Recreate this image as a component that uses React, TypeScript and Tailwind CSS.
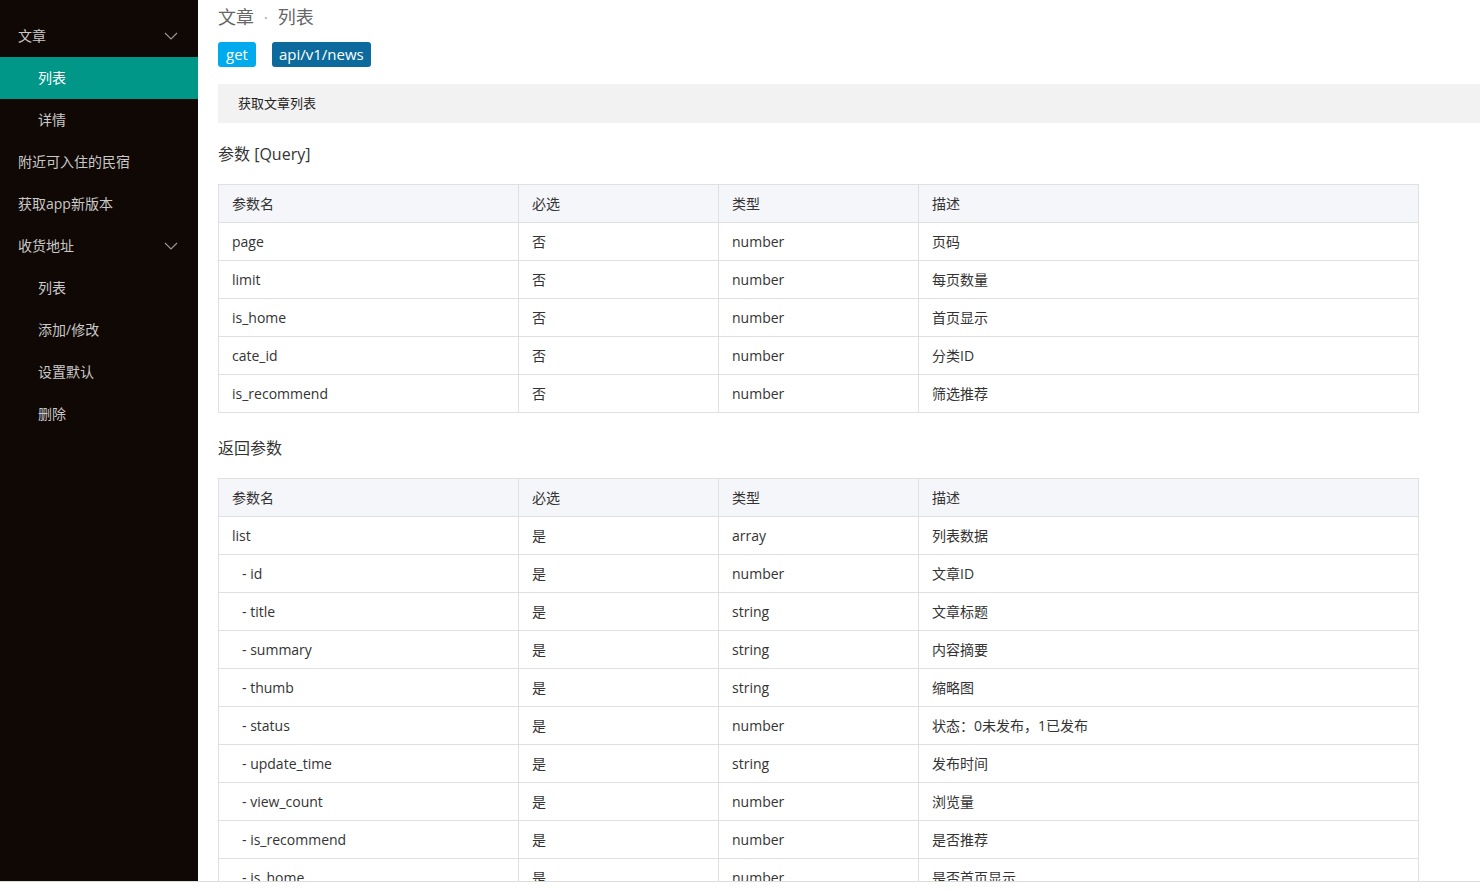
import React from 'react';

type Row = { name: string; req: string; type: string; desc: string; child?: boolean };

const queryRows: Row[] = [
  { name: 'page', req: '否', type: 'number', desc: '页码' },
  { name: 'limit', req: '否', type: 'number', desc: '每页数量' },
  { name: 'is_home', req: '否', type: 'number', desc: '首页显示' },
  { name: 'cate_id', req: '否', type: 'number', desc: '分类ID' },
  { name: 'is_recommend', req: '否', type: 'number', desc: '筛选推荐' },
];

const returnRows: Row[] = [
  { name: 'list', req: '是', type: 'array', desc: '列表数据' },
  { name: 'id', req: '是', type: 'number', desc: '文章ID', child: true },
  { name: 'title', req: '是', type: 'string', desc: '文章标题', child: true },
  { name: 'summary', req: '是', type: 'string', desc: '内容摘要', child: true },
  { name: 'thumb', req: '是', type: 'string', desc: '缩略图', child: true },
  { name: 'status', req: '是', type: 'number', desc: '状态：0未发布，1已发布', child: true },
  { name: 'update_time', req: '是', type: 'string', desc: '发布时间', child: true },
  { name: 'view_count', req: '是', type: 'number', desc: '浏览量', child: true },
  { name: 'is_recommend', req: '是', type: 'number', desc: '是否推荐', child: true },
  { name: 'is_home', req: '是', type: 'number', desc: '是否首页显示', child: true },
  { name: 'create_time', req: '是', type: 'string', desc: '创建时间', child: true },
  { name: 'total', req: '是', type: 'number', desc: '总数' },
];

const Chevron = () => (
  <svg width="14" height="8" viewBox="0 0 14 8" fill="none" className="text-[#9a9a9a]">
    <path d="M1 1l6 6 6-6" stroke="currentColor" strokeWidth="1.1" />
  </svg>
);

const NavItem: React.FC<{ label: string; sub?: boolean; active?: boolean; open?: boolean }> = ({ label, sub, active, open }) => (
  <div
    className={`h-[42px] flex items-center justify-between pr-[20px] text-[14px] ${sub ? 'pl-[38px]' : 'pl-[18px]'} ${
      active ? 'bg-[#009688] text-white' : 'text-[#c9c9c9]'
    }`}
  >
    <span className="-mt-[2px]">{label}</span>
    {open && <Chevron />}
  </div>
);

const ParamTable: React.FC<{ rows: Row[] }> = ({ rows }) => (
  <table className="w-[1200px] border-collapse table-fixed text-[14px] text-[#333]">
    <colgroup>
      <col className="w-[300px]" />
      <col className="w-[200px]" />
      <col className="w-[200px]" />
      <col className="w-[500px]" />
    </colgroup>
    <thead>
      <tr className="bg-[#f5f6f9]">
        {['参数名', '必选', '类型', '描述'].map((h) => (
          <th key={h} className="h-[38px] border border-[#e0e0e0] px-[13px] text-left font-normal">
            {h}
          </th>
        ))}
      </tr>
    </thead>
    <tbody>
      {rows.map((r, i) => (
        <tr key={i}>
          <td className="h-[38px] border border-[#e0e0e0] px-[13px]">
            {r.child ? <span className="pl-[10px]">- {r.name}</span> : r.name}
          </td>
          <td className="border border-[#e0e0e0] px-[13px]">{r.req}</td>
          <td className="border border-[#e0e0e0] px-[13px]">{r.type}</td>
          <td className="border border-[#e0e0e0] px-[13px]">{r.desc}</td>
        </tr>
      ))}
    </tbody>
  </table>
);

export default function App() {
  return (
    <div className="bg-white" style={{ fontFamily: '"Open Sans", "Noto Sans CJK SC", sans-serif' }}>
      <div className="h-[882px] flex overflow-hidden border-b border-[#dcdcdc]">
        <aside className="w-[198px] shrink-0 bg-[#100804] pt-[15px]">
          <NavItem label="文章" open />
          <NavItem label="列表" sub active />
          <NavItem label="详情" sub />
          <NavItem label="附近可入住的民宿" />
          <NavItem label="获取app新版本" />
          <NavItem label="收货地址" open />
          <NavItem label="列表" sub />
          <NavItem label="添加/修改" sub />
          <NavItem label="设置默认" sub />
          <NavItem label="删除" sub />
        </aside>
        <main className="flex-1 overflow-hidden pl-[20px]">
          <div className="h-[24px] mt-[5px] flex items-center text-[18px] text-[#666]">
            <span>文章</span>
            <span className="mx-[10px] text-[#999] text-[14px]">·</span>
            <span>列表</span>
          </div>
          <div className="mt-[13px] flex items-center gap-[16px] text-[15px] text-white">
            <span className="h-[25px] px-[8px] flex items-center rounded-[3px] bg-[#01aaed]">get</span>
            <span className="h-[25px] px-[7px] flex items-center rounded-[3px] bg-[#0c6b9c]">api/v1/news</span>
          </div>
          <div className="mt-[17px] h-[39px] bg-[#f2f2f2] flex items-center pl-[20px] text-[13px] text-[#222]">
            获取文章列表
          </div>
          <div className="mt-[19px] h-[24px] flex items-center text-[16px] text-[#333]">参数 [Query]</div>
          <div className="mt-[18px]">
            <ParamTable rows={queryRows} />
          </div>
          <div className="mt-[23px] h-[24px] flex items-center text-[16px] text-[#333]">返回参数</div>
          <div className="mt-[18px]">
            <ParamTable rows={returnRows} />
          </div>
        </main>
      </div>
    </div>
  );
}
